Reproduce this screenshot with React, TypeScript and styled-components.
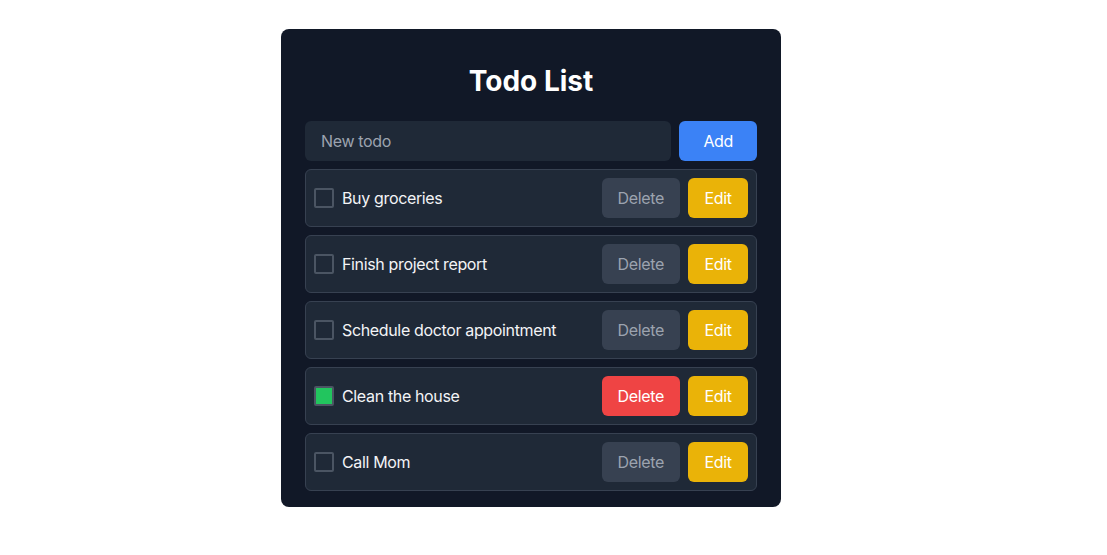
import React, { useState } from "react";
import styled, { createGlobalStyle } from "styled-components";

const Global = createGlobalStyle`
  html, body { margin: 0; padding: 0; background: #ffffff; }
  body { font-family: Inter, "Noto Sans", sans-serif; }
  * { box-sizing: border-box; }
`;

const Page = styled.div`
  padding: 29px 0 0 281px;
`;

const Card = styled.div`
  width: 500px;
  background: #111827;
  border-radius: 8px;
  padding: 33px 24px 16px 24px;
`;

const Title = styled.h1`
  margin: 0 0 20px 0;
  font-size: 28px;
  line-height: 39px;
  font-weight: 700;
  color: #ffffff;
  text-align: center;
`;

const Form = styled.div`
  display: flex;
  gap: 8px;
  margin-bottom: 8px;
`;

const Input = styled.input`
  flex: 1;
  height: 40px;
  border: none;
  outline: none;
  border-radius: 6px;
  background: #1f2937;
  color: #f3f4f6;
  font-family: inherit;
  font-size: 16px;
  letter-spacing: -0.35px;
  padding: 0 16px;
  &::placeholder { color: #9ca3af; }
`;

const Button = styled.button<{ $variant: "add" | "delete" | "deleteOff" | "edit" }>`
  height: 40px;
  min-width: ${(p) => (p.$variant === "edit" ? "60px" : "auto")};
  border: none;
  border-radius: 6px;
  font-family: inherit;
  font-size: 16px;
  letter-spacing: -0.35px;
  padding: 0 ${(p) => (p.$variant === "add" ? "24px" : "16px")};
  cursor: pointer;
  color: ${(p) => (p.$variant === "deleteOff" ? "#9ca3af" : "#ffffff")};
  background: ${(p) =>
    p.$variant === "add"
      ? "#3b82f6"
      : p.$variant === "delete"
      ? "#ef4444"
      : p.$variant === "edit"
      ? "#eab308"
      : "#374151"};
`;

const List = styled.ul`
  list-style: none;
  margin: 0;
  padding: 0;
  display: flex;
  flex-direction: column;
  gap: 8px;
`;

const Row = styled.li`
  display: flex;
  align-items: center;
  justify-content: space-between;
  padding: 8px;
  background: #1f2937;
  border: 1px solid #374151;
  border-radius: 6px;
`;

const Left = styled.label`
  display: flex;
  align-items: center;
  gap: 8px;
  color: #f3f4f6;
  font-size: 16px;
  letter-spacing: -0.35px;
  cursor: pointer;
`;

const Box = styled.span<{ $checked: boolean }>`
  width: 20px;
  height: 20px;
  border: 2px solid #4b5563;
  border-radius: 2px;
  background: ${(p) => (p.$checked ? "#22c55e" : "transparent")};
`;

const Actions = styled.div`
  display: flex;
  gap: 8px;
`;

const initial = [
  { text: "Buy groceries", done: false },
  { text: "Finish project report", done: false },
  { text: "Schedule doctor appointment", done: false },
  { text: "Clean the house", done: true },
  { text: "Call Mom", done: false },
];

export default function App() {
  const [todos, setTodos] = useState(initial);
  return (
    <Page>
      <Global />
      <Card>
        <Title>Todo List</Title>
        <Form>
          <Input placeholder="New todo" />
          <Button $variant="add">Add</Button>
        </Form>
        <List>
          {todos.map((t, i) => (
            <Row key={t.text}>
              <Left
                onClick={() =>
                  setTodos(todos.map((x, j) => (j === i ? { ...x, done: !x.done } : x)))
                }
              >
                <Box $checked={t.done} />
                {t.text}
              </Left>
              <Actions>
                <Button $variant={t.done ? "delete" : "deleteOff"}>Delete</Button>
                <Button $variant="edit">Edit</Button>
              </Actions>
            </Row>
          ))}
        </List>
      </Card>
    </Page>
  );
}
